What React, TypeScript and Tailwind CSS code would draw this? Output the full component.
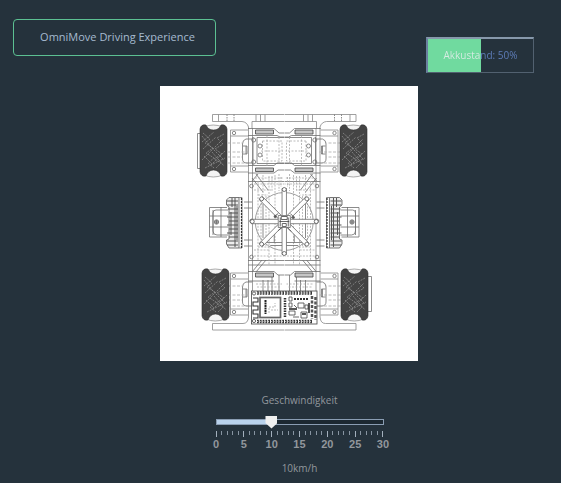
import { useState } from "react";

const INK = "#6f6f6f";
const tickValues = Array.from({ length: 31 }, (_, i) => i);
const labelValues = [0, 5, 10, 15, 20, 25, 30];
const spokeAngles = [45, 135, 225, 315, 0, 90, 180, 270];

function Wheel({ x, y }: { x: number; y: number }) {
  return (
    <g transform={`translate(${x} ${y})`}>
      <path d="M4 3Q13 -1 23 3L20 8H8Z M4 51Q13 55 23 51L20 45H8Z" fill="#f4f4f4" stroke="#8a8a8a" strokeWidth=".7" />
      <path
        d="M0 5Q1 0 6 1Q8 6 13.500 6Q19 6 21 1Q26 0 27 5V48Q26 53 21 52Q19 46 13.500 46Q8 46 6 52Q1 53 0 48Z"
        fill="#444"
        stroke="#2f2f2f"
        strokeWidth=".6"
      />
      <path
        d="M3 9L10 15L5 19L13 24L6 29L14 34L8 39L14 44M24 10L17 14L23 20L15 25L22 30L14 35L21 39L16 44M2 18L14 8M25 27L10 42M2 36L23 15M5 44L25 34M3 25L16 13M12 28L24 42M2 12L10 22L24 36M4 32L12 40"
        fill="none"
        stroke="#8d8d8d"
        strokeWidth=".8"
        strokeDasharray="2 1"
      />
    </g>
  );
}

function AxleMount({ y }: { y: number }) {
  return (
    <g transform={`translate(0 ${y})`}>
      <path d="M248 0H230.500V42H248M230.500 6H248M230.500 36H248" stroke="#888" />
      <circle cx="234" cy="3" r="1.700" />
      <circle cx="234" cy="39" r="1.700" />
      <path d="M252 9H246Q242.500 10 242.500 14V29Q242.500 33 247 33H252M243 16H247V24H243M246 16V24" />
      <path d="M228 13H242M228 22H250M228 33H248M228 27H242" strokeDasharray="3 1.500" stroke="#aaa" />
    </g>
  );
}

function SideMotor() {
  return (
    <g>
      <path d="M227 207.500H209.500V237H227M209.500 216H228M209.500 227H228M213 210V235M221 207V237" />
      <path d="M228 210H216Q213 210 213 213V231Q213 235 217 235H228" />
      <circle cx="216.500" cy="222" r="2.200" fill="#bbb" />
      <path d="M214.500 222H218.500M216.500 220V224" />
      <path d="M229 197.500H239V248H229L226.500 244V240L229 239V207L226.500 205V200Z" fill="#ededed" stroke="#555" />
      <path
        d="M227 201H238M227 205H238M228 209H238M229 213H238M227 217H238M229 221H238M227 225H238M229 229H238M227 233H238M229 237H238M227 241H238M227 245H238M232 198V207M235 198V247M231 212V235M237 206V240"
        stroke="#555"
        strokeWidth="1"
      />
      <path d="M239 197.500H242V248H239M244 202H252M244 208H252M244 240H252M244 246H252" />
      <path d="M241.500 198V248" stroke="#333" strokeWidth="1.200" strokeDasharray="2 1" />
    </g>
  );
}

function ChassisHalf() {
  return (
    <g fill="none" stroke={INK} strokeWidth=".8">
      <path d="M284 114.500H212.500V121.500H242Q247 122 248.500 127V129M218.500 114.500V121.500M256 114.500V121.500M260.500 114.500V121.500M265 114.500V121.500M252 121.500H284M252 121.500V128" stroke="#888" />
      <path d="M227 114.500V121.500M234 114.500V121.500" strokeDasharray="1.500 1" />
      <path d="M248.500 128V317Q248 323.500 243 323.500H212.500V330H284M252.500 128V293" stroke="#888" />
      <path d="M248 128.500H274L279 133H284M248 135.500H277L280 137H284M248 165.500H274L277 163H284M248 173H274L278 170H284" />
      <path d="M255.500 130H273.500V134H255.500ZM255.500 168H273.500V171.500H255.500Z" fill="#c6c6c6" stroke="#444" />
      <path d="M257 137.500H284M257 137.500V163.500H284M253 137V165" />
      <path d="M262.500 141H282V161H262.500ZM267 136V166M279 137V165M261 151H283" strokeDasharray="2 1.500" stroke="#aaa" />
      <circle cx="253.700" cy="140" r="2" />
      <circle cx="253.700" cy="162" r="2" />
      <circle cx="260" cy="146" r="2" />
      <circle cx="260" cy="155" r="2" />
      <AxleMount y={130} />
      <AxleMount y={273} />
      <path d="M248 181.500H284M248 260.500H284M248 265H284M252 178L263 192M256 174L268 190M252 181L258 174" />
      <path d="M254 184H284M258 181V260M263 175V195M269 176V265M275 175V265M254 256H284M254 190H271M254 250H270M279 174V191M272 176V192M281 177V187M255 178H283M258 195H268M258 247H269M261 200V243M266 196V246" strokeDasharray="2 1.200" stroke="#aaa" />
      <circle cx="251.500" cy="186" r="1.800" />
      <circle cx="251.500" cy="221" r="1.800" />
      <circle cx="251.500" cy="257" r="1.800" />
      <path d="M263 204V238M248 271.500H274L278 275H284M248 281H274M272 277V291M279 275V291M263 280V291M268 280V291M252 272L262 260M256 272L266 260" />
      <path d="M255.500 273H273.500V277H255.500Z" fill="#c6c6c6" stroke="#444" />
      <path d="M256 284H282M257 287H280" strokeDasharray="2 1.500" stroke="#aaa" />
      <SideMotor />
    </g>
  );
}

function SpokedHub() {
  return (
    <g transform="translate(284.250 221.500)" fill="none" stroke="#6a6a6a" strokeWidth=".8">
      <circle r="29" stroke="#888" />
      <path d="M-18 21H18M-14 24H14M-10 10V21M10 10V21" />
      {spokeAngles.map((angle) => (
        <g key={angle} transform={`rotate(${angle})`}>
          <path d="M-2.200 -6V-33H2.200V-6" fill="#fff" />
          <circle cy="-32" r="2" fill="#fff" stroke="#555" />
        </g>
      ))}
      <path d="M-6 -6H6V6H-6Z" fill="#fff" />
      <path d="M-3 -5H3V-2H-3ZM-5 0H5M-4 -4V5M4 -4V5M-2 2H2V5H-2ZM-10 -5L-6 -8M6 -8L10 -4M-6 9L-2 6M3 6L7 10" stroke="#444" />
      <circle cx="-9" cy="-5" r="1.200" fill="#555" />
      <circle cx="9" cy="-4" r="1.200" fill="#555" />
    </g>
  );
}

function ControllerBoard() {
  return (
    <g fill="none" stroke="#444" strokeWidth=".8">
      <rect x="251.500" y="291" width="65.500" height="33" fill="#fff" />
      <path d="M257 293H313M257 321.500H313" stroke="#383838" strokeWidth="3.600" strokeDasharray="1.800 1" />
      <path d="M257 293H313M257 321.500H313" stroke="#ddd" strokeWidth="1" strokeDasharray=".8 2" />
      <circle cx="254" cy="293.500" r="1.600" />
      <circle cx="254" cy="321" r="1.600" />
      <rect x="260" y="297.500" width="20.500" height="20" stroke="#666" strokeWidth="1.700" />
      <path d="M253 298H258V302H253V306H258V310H253V314H258V318H253" stroke="#333" strokeWidth="1.100" />
      <path d="M265.500 300V314" stroke="#222" strokeWidth="2" strokeDasharray="2 .5" />
      <path d="M269 313V307H275V303M271 310H278" stroke="#aaa" strokeDasharray="2 1" />
      <path d="M285 298V318" stroke="#333" strokeWidth="2.500" strokeDasharray="1.500 1" />
      <path d="M294 299H309" stroke="#333" strokeWidth="2" strokeDasharray="2 1" />
      <path d="M289 297H292V301H289ZM289 303H292V307H289ZM289 311H295V315H289ZM298 303H304V308H298ZM305 305H308V309H305ZM294 305L297 308M293 317H299M301 312H307V318H301Z" />
      <path d="M289 309H297M309 303V313M302 314H306" stroke="#222" strokeWidth="1.500" />
      <path d="M312 296V319M315.500 297V320" stroke="#555" strokeWidth="2.500" strokeDasharray="3 1.500" />
    </g>
  );
}

function VehicleDrawing() {
  return (
    <svg viewBox="160 86 258 275" className="block w-full" role="img" aria-label="OmniMove">
      <ChassisHalf />
      <g transform="translate(568.500 0) scale(-1 1)">
        <ChassisHalf />
      </g>
      <SpokedHub />
      <ControllerBoard />
      <path d="M200 133.500H197.500V168.500H200M368 276.500H371.500V311.500H368" fill="none" stroke={INK} strokeWidth=".8" />
      <Wheel x={200} y={124} />
      <Wheel x={340} y={124} />
      <Wheel x={202} y={268} />
      <Wheel x={341} y={268} />
    </svg>
  );
}

function BatteryMeter({ level }: { level: number }) {
  return (
    <div
      role="meter"
      aria-label="Akkustand"
      aria-valuemin={0}
      aria-valuemax={100}
      aria-valuenow={level}
      className="mt-[18px] grid h-9 w-[108px] border border-t-2 border-l-2 border-[#526170] border-t-[#8798ab] border-l-[#6a809f]"
    >
      <div className="col-start-1 row-start-1 bg-[#70da9f]" style={{ width: `${level}%` }} />
      <div
        className="col-start-1 row-start-1 bg-clip-text text-center text-[10px] leading-[33px] text-transparent"
        style={{ backgroundImage: `linear-gradient(90deg, #d9ebe4 ${level}%, #5f7fbd ${level}%)` }}
      >
        Akkustand: {level}%
      </div>
    </div>
  );
}

function SpeedControl() {
  const [speed, setSpeed] = useState(10);
  return (
    <section className="mt-8 flex flex-col items-center pl-[38px] text-[10px] leading-[14px] text-[#92979d]">
      <label htmlFor="speed">Geschwindigkeit</label>
      <div className="mt-2 grid w-[180px] items-center">
        <div className="col-start-1 row-start-1 mx-[6px] h-[6px] border border-[#8a9db3] bg-[#1c2831]">
          <div className="h-full bg-[#b9d2ec]" style={{ width: `${(speed / 30) * 100}%` }} />
        </div>
        <input
          id="speed"
          type="range"
          min={0}
          max={30}
          value={speed}
          onChange={(e) => setSpeed(Number(e.target.value))}
          className="col-start-1 row-start-1 h-[14px] w-full cursor-pointer appearance-none bg-transparent [&::-webkit-slider-thumb]:h-[13px] [&::-webkit-slider-thumb]:w-[12px] [&::-webkit-slider-thumb]:appearance-none [&::-webkit-slider-thumb]:bg-[#f0f0f0] [&::-webkit-slider-thumb]:[clip-path:polygon(0_0,100%_0,100%_58%,50%_100%,0_58%)]"
        />
      </div>
      <div className="mt-[2px] flex h-[6px] w-[168px] items-start justify-between">
        {tickValues.map((v) => (
          <span key={v} className={v % 5 === 0 ? "h-[6px] w-px bg-[#a3b0bd]" : "h-1 w-px bg-[#8794a1]"} />
        ))}
      </div>
      <div className="flex w-[167px] justify-between font-['Liberation_Sans',Arial,sans-serif] text-[11px] font-bold">
        {labelValues.map((v) => (
          <span key={v} className="flex w-0 justify-center">
            {v}
          </span>
        ))}
      </div>
      <output htmlFor="speed" className="mt-[10px]">
        {speed}km/h
      </output>
    </section>
  );
}

export default function App() {
  return (
    <main className="min-h-screen bg-[#25323c] pt-[19px] font-['Open_Sans','Noto_Sans',sans-serif]">
      <header className="flex items-start justify-between pr-[27px] pl-[13px]">
        <button
          type="button"
          className="h-[37px] w-[203px] rounded-[4px] border border-[#5cc092] pl-[6px] text-center text-[11px] text-[#a5bbd0]"
        >
          OmniMove Driving Experience
        </button>
        <BatteryMeter level={50} />
      </header>
      <div className="mt-[13px] flex justify-center pl-[17px]">
        <div className="w-[258px] bg-white">
          <VehicleDrawing />
        </div>
      </div>
      <SpeedControl />
    </main>
  );
}
